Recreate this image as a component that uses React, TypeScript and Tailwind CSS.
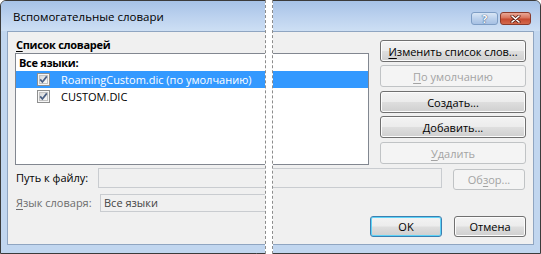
import React from "react";

const FONT = "font-['Open_Sans','Noto_Sans',sans-serif]";

function CheckBox({ id }: { id: string }) {
  return (
    <svg width="13" height="13" viewBox="0 0 13 13" className="shrink-0">
      <defs>
        <linearGradient id={id} x1="0" y1="0" x2="1" y2="1">
          <stop offset="0" stopColor="#d6d6d6" />
          <stop offset="1" stopColor="#fdfdfd" />
        </linearGradient>
      </defs>
      <rect x="0.5" y="0.5" width="12" height="12" fill="#f6f6f6" stroke="#8e8f8f" />
      <rect x="2.5" y="2.5" width="8" height="8" fill={`url(#${id})`} stroke="#c2c2c2" />
      <path d="M3.2 6.4 L5.4 9 L9.8 3.4" fill="none" stroke="#4a5f83" strokeWidth="1.7" />
    </svg>
  );
}

type BtnProps = {
  children: React.ReactNode;
  disabled?: boolean;
  def?: boolean;
  className?: string;
};

function Btn({ children, disabled, def, className = "" }: BtnProps) {
  let look =
    "border-[#707070] bg-[linear-gradient(to_bottom,#f3f3f3_0%,#ececec_48%,#dedede_52%,#cfcfcf_100%)] shadow-[inset_0_0_0_1px_#fcfcfc] text-black";
  if (disabled) look = "border-[#c0c3c5] bg-[#f4f4f4] text-[#a3a3a3]";
  if (def)
    look =
      "border-[#3c7fb1] bg-[linear-gradient(to_bottom,#f3f3f3_0%,#ececec_48%,#dedede_52%,#cfcfcf_100%)] shadow-[inset_0_0_0_1px_#5ed3f7] text-black";
  return (
    <div
      className={`flex items-center justify-center rounded-[3px] border text-[11px] leading-none ${look} ${className}`}
    >
      {children}
    </div>
  );
}

function U({ children }: { children: React.ReactNode }) {
  return <span className="underline underline-offset-[2px] decoration-1">{children}</span>;
}

export default function App() {
  return (
    <div className={`relative w-[541px] h-[254px] overflow-hidden bg-white ${FONT}`}>
      <div className="flex flex-col w-[541px] h-[254px] border border-[#3b3b3b] rounded-tl-[6px] rounded-tr-[6px] bg-[#c1d6ef]">
        {/* Title bar */}
        <div className="flex h-[30px] shrink-0 bg-[linear-gradient(to_bottom,#a6c2e7_0%,#bbd1ee_50%,#cddff4_100%)] rounded-t-[5px]">
          <div className="pl-[12px] pt-[8px] text-[11.5px] leading-[16px] text-black">
            Вспомогательные словари
          </div>
          <div className="ml-auto mr-[9px] mt-[11px] flex h-[13px] gap-[2px]">
            <div className="flex w-[27px] h-[13px] items-center justify-center rounded-[3px] border border-[#7e9dc4] bg-[linear-gradient(to_bottom,#d9e6f5_0%,#bcd1ec_50%,#a6c0e3_100%)]">
              <span className="text-[11px] leading-none font-bold text-white [text-shadow:0_0_1px_#2a4a78,0_0_1px_#2a4a78]">
                ?
              </span>
            </div>
            <div className="flex w-[31px] h-[13px] items-center justify-center rounded-[3px] border border-[#8b3b2c] bg-[linear-gradient(to_bottom,#e9a896_0%,#d9735b_45%,#c64a30_55%,#d4694c_100%)]">
              <svg width="11" height="8" viewBox="0 0 11 8">
                <path d="M2 1 L9 7 M9 1 L2 7" stroke="#5a1d12" strokeWidth="3" strokeLinecap="round" />
                <path d="M2 1 L9 7 M9 1 L2 7" stroke="#ffffff" strokeWidth="1.6" strokeLinecap="round" />
              </svg>
            </div>
          </div>
        </div>

        {/* Client area */}
        <div className="mx-[6px] h-[214px] shrink-0 border border-[#8fa5c1] bg-[#f0f0f0] text-[11px] text-black">
          <div className="flex flex-col h-full pl-[7px] pr-[7px]">
            {/* top section */}
            <div className="flex justify-between">
              <div className="flex flex-col w-[354px]">
                <div className="mt-[5px] h-[16px] pl-[1px] font-bold leading-[16px] text-[11px] tracking-[-0.3px]">
                  <U>С</U>писок словарей
                </div>
                <div className="h-[112px] border border-[#828790] bg-white">
                  <div className="h-[17px] pl-[3px] font-bold leading-[17px] tracking-[-0.3px]">Все языки:</div>
                  <div className="flex h-[17px] items-center bg-[#3399ff] text-white">
                    <div className="ml-[21px]">
                      <CheckBox id="cb1" />
                    </div>
                    <span className="ml-[11px] leading-[17px]">RoamingCustom.dic (по умолчанию)</span>
                  </div>
                  <div className="flex h-[17px] items-center">
                    <div className="ml-[21px]">
                      <CheckBox id="cb2" />
                    </div>
                    <span className="ml-[11px] leading-[17px]">CUSTOM.DIC</span>
                  </div>
                </div>
              </div>
              <div className="flex flex-col w-[146px] pt-[8px]">
                <Btn className="h-[22px]">
                  <span>
                    <U>И</U>зменить список слов...
                  </span>
                </Btn>
                <Btn disabled className="h-[22px] mt-[3px]">
                  <span>
                    <U>П</U>о умолчанию
                  </span>
                </Btn>
                <Btn className="h-[22px] mt-[4px]">
                  <span>
                    Соз<U>д</U>ать...
                  </span>
                </Btn>
                <Btn className="h-[22px] mt-[3px]">
                  <span>
                    <U>Д</U>обавить...
                  </span>
                </Btn>
                <Btn disabled className="h-[22px] mt-[4px]">
                  <span>
                    <U>У</U>далить
                  </span>
                </Btn>
              </div>
            </div>

            {/* path row */}
            <div className="mt-[3px] flex h-[22px] items-start">
              <div className="w-[83px] pl-[1px] h-[20px] leading-[20px]">Путь к файлу:</div>
              <div className="h-[20px] w-[344px] border border-[#c9ccd0] bg-[#f0f0f0]" />
              <Btn disabled className="ml-[11px] mt-[1px] h-[21px] w-[72px]">
                <span>
                  Об<U>з</U>ор...
                </span>
              </Btn>
            </div>

            {/* language row */}
            <div className="mt-[4px] flex h-[18px] items-center">
              <div className="w-[85px] pl-[1px] leading-[18px] text-[#6d6d6d]">
                <U>Я</U>зык словаря:
              </div>
              <div className="h-[18px] w-[170px] border border-[#c9ccd0] bg-[#f0f0f0] pl-[3px] leading-[16px] text-[#444]">
                Все языки
              </div>
            </div>

            {/* bottom buttons */}
            <div className="mt-[4px] flex justify-end gap-[12px]">
              <Btn def className="h-[21px] w-[72px]">
                OK
              </Btn>
              <Btn className="h-[21px] w-[72px]">Отмена</Btn>
            </div>
          </div>
        </div>
      </div>

      {/* torn strip overlay */}
      <div className="absolute top-0 bottom-0 left-[265px] w-[8px] border-x border-dashed border-[#8c8c8c] bg-white" />
    </div>
  );
}
